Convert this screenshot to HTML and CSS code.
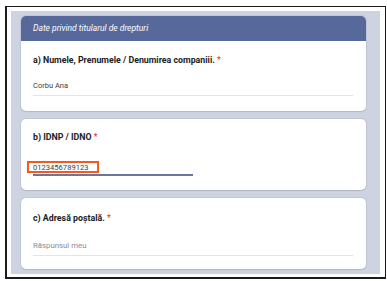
FILE: index.html
```html
<!DOCTYPE html>
<html lang="ro">
<head>
<meta charset="utf-8">
<link rel="stylesheet" href="styles.css">
</head>
<body>
<div class="frame">
  <div class="bg">
    <section class="card card-a">
      <div class="card-head">Date privind titularul de drepturi</div>
      <div class="card-body">
        <div class="label">a) Numele, Prenumele / Denumirea companiii. <span class="req">*</span></div>
        <div class="answer filled">Corbu Ana</div>
      </div>
    </section>
    <section class="card card-b">
      <div class="card-body">
        <div class="label">b) IDNP / IDNO <span class="req">*</span></div>
        <div class="focus-wrap">
          <div class="answer focused">0123456789123</div>
          <div class="highlight"></div>
        </div>
      </div>
    </section>
    <section class="card card-c">
      <div class="card-body">
        <div class="label">c) Adresă poștală. <span class="req">*</span></div>
        <div class="answer empty">Răspunsul meu</div>
      </div>
    </section>
  </div>
</div>
</body>
</html>
```

FILE: styles.css
```css
* { box-sizing: border-box; }
html, body { margin: 0; padding: 0; background: #fff; }
body { font-family: Roboto, "Noto Sans", Arial, sans-serif; }

.frame {
  margin: 6px 0 0 5px;
  width: 381px;
  height: 273px;
  border-style: solid;
  border-color: #1b1b1b;
  border-width: 1px 1px 2px 2px;
  padding: 4px 5px 3px 4px;
  background: #fff;
}

.bg {
  height: 100%;
  background: #cdd3e1;
  padding: 5px 14px 5px 10px;
  display: flex;
  flex-direction: column;
  gap: 8px;
}

.card {
  background: #fff;
  border-radius: 5px;
  box-shadow: 0 0 0 1px rgba(60, 64, 90, 0.08), 0 1px 1px rgba(60, 64, 90, 0.12);
}
.card-a { height: 95px; }
.card-b { height: 71px; }
.card-c { height: 71px; }

.card-head {
  height: 25px;
  background: #57689a;
  border-radius: 5px 5px 0 0;
  color: #fff;
  font-style: italic;
  font-size: 8.5px;
  line-height: 25px;
  padding-left: 12px;
}

.card-body { padding: 0 13px 0 12px; }
.card-a .card-body { padding-top: 14px; }
.card-b .card-body { padding-top: 13px; }
.card-c .card-body { padding-top: 15px; }

.label {
  font-size: 8.8px;
  line-height: 10px;
  font-weight: 700;
  color: #202124;
}
.req { color: #d93025; font-weight: 400; }

.answer {
  font-size: 7.5px;
  line-height: 10px;
  padding-bottom: 4px;
  border-bottom: 1px solid #e4e4e8;
}
.filled { margin-top: 16px; color: #3c4043; }
.empty { margin-top: 18px; color: #8a8d93; font-size: 7.8px; }

.focus-wrap { position: relative; margin-top: 21px; }
.focused {
  width: 160px;
  font-size: 7.6px;
  color: #3c4043;
  padding: 0 0 1px 0;
  line-height: 10px;
  border-bottom: 2px solid #6a76a2;
}
.highlight {
  position: absolute;
  left: -6px;
  top: -2px;
  width: 72px;
  height: 12px;
  border: 2px solid #f25a22;
}
```
